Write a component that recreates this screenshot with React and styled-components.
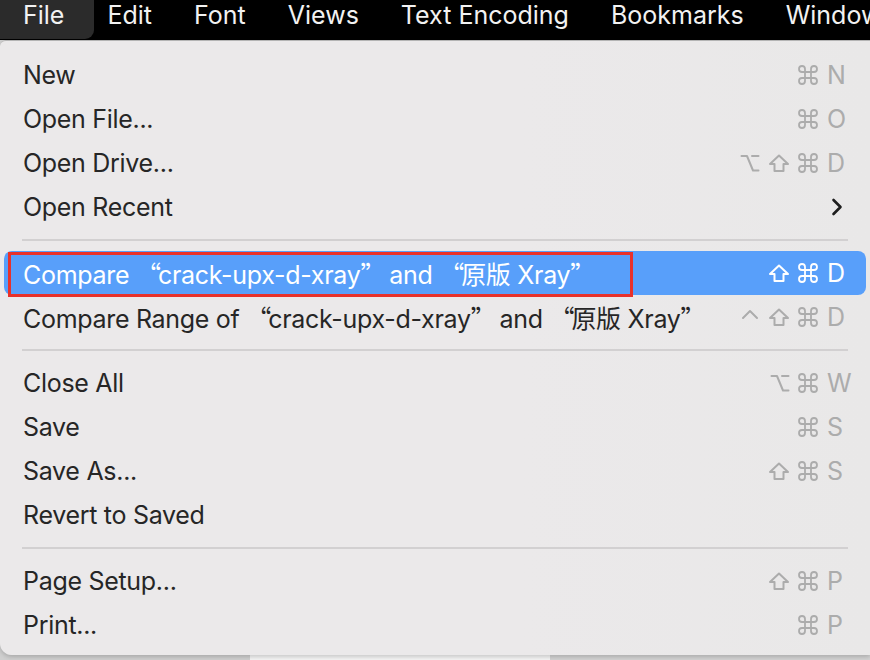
import React from "react";
import styled, { createGlobalStyle } from "styled-components";

const GlobalStyle = createGlobalStyle`
  html, body {
    margin: 0;
    padding: 0;
    background: #d4d4d4;
  }
  body {
    width: 870px;
    height: 660px;
    overflow: hidden;
    font-family: Inter, "Noto Sans CJK SC", "Liberation Sans", sans-serif;
  }
`;

const Screen = styled.div`
  display: flex;
  flex-direction: column;
  width: 870px;
  height: 660px;
  background: linear-gradient(to right, #cfcfcf 0 250px, #f4f4f4 250px 550px, #d2d2d2 550px);
`;

const MenuBar = styled.div`
  display: flex;
  align-items: stretch;
  height: 40px;
  background: #000;
  flex-shrink: 0;
  overflow: hidden;
`;

const MenuTitle = styled.div`
  display: flex;
  align-items: center;
  padding: ${({ active }) => (active ? "0 30px 10px 23px" : "0 21px 10px")};
  margin-right: ${({ active }) => (active ? "-8px" : "0")};
  background: ${({ active }) => (active ? "#2b2b2b" : "transparent")};
  border-radius: 0 0 9px 0;
  color: #f2f2f2;
  font-size: 25px;
  font-weight: 400;
  white-space: nowrap;
  height: 39px;
  box-sizing: border-box;
`;

const Dropdown = styled.div`
  display: flex;
  flex-direction: column;
  height: 615px;
  padding: 12px 0 8px;
  box-sizing: border-box;
  background: linear-gradient(to right, #ebe9ea, #ebe9ea 60%, #e9e8e8);
  border-top: 1px solid #b4b4b4;
  border-radius: 6px 0 0 12px;
  box-shadow: 0 2px 4px rgba(0, 0, 0, 0.18);
`;

const Row = styled.div`
  position: relative;
  display: flex;
  align-items: center;
  justify-content: space-between;
  height: 44px;
  margin: 0 4px;
  padding: 0 17px 0 19px;
  border-radius: 8px;
  background: ${({ highlighted }) => (highlighted ? "#589ffa" : "transparent")};
  color: ${({ highlighted }) => (highlighted ? "#ffffff" : "#262626")};
  font-size: 25px;
  white-space: nowrap;
`;

const Label = styled.span`
  letter-spacing: -0.3px;
`;

// curly quotes are set full-width, as the CJK system font does
const Quote = styled.span`
  font-family: "Noto Sans CJK SC", sans-serif;
  letter-spacing: -3px;
`;

const Separator = styled.div`
  display: flex;
  align-items: center;
  height: 22px;
  padding: 0 22px;

  &::after {
    content: "";
    flex: 1;
    height: 2px;
    background: #d2d0d1;
  }
`;

const Shortcut = styled.div`
  display: flex;
  align-items: center;
  gap: 8px;
  color: ${({ highlighted }) => (highlighted ? "#ffffff" : "#acacac")};
`;

const Key = styled.span`
  width: 22px;
  margin-left: 1px;
  text-align: left;
`;

const Glyph = styled.svg`
  display: block;
  width: ${({ w }) => w || 20}px;
  height: 20px;
  fill: none;
  stroke: currentColor;
  stroke-width: 2;
  stroke-linecap: round;
  stroke-linejoin: round;
`;

const Chevron = styled.svg`
  display: block;
  width: 12px;
  height: 18px;
  margin-right: 6px;
  fill: none;
  stroke: #1e1e1e;
  stroke-width: 2.6;
  stroke-linecap: round;
  stroke-linejoin: round;
`;

const Annotation = styled.div`
  position: absolute;
  left: 4px;
  top: 1px;
  width: 625px;
  height: 45px;
  box-sizing: border-box;
  border: 3px solid #e8312b;
  pointer-events: none;
`;

const glyphs = {
  cmd: (
    <Glyph viewBox="2 2 20 20" style={{ strokeWidth: 1.8 }}>
      <path d="M15 6v12a3 3 0 1 0 3-3H6a3 3 0 1 0 3 3V6a3 3 0 1 0-3 3h12a3 3 0 1 0-3-3" />
    </Glyph>
  ),
  shift: (
    <Glyph viewBox="0 0 22 20" w={22}>
      <path d="M11 2.5 L20 11 H15.5 V18 H6.5 V11 H2 Z" />
    </Glyph>
  ),
  opt: (
    <Glyph viewBox="0 0 20 20">
      <path d="M1.5 3 H7 L13 17.5 H18.5" />
      <path d="M12 3 H18.5" />
    </Glyph>
  ),
  ctrl: (
    <Glyph viewBox="0 0 20 20">
      <path d="M3 11 L10 4 L17 11" />
    </Glyph>
  ),
};

const menuTitles = ["File", "Edit", "Font", "Views", "Text Encoding", "Bookmarks", "Window"];

const items = [
  { label: "New", mods: ["cmd"], key: "N" },
  { label: "Open File...", mods: ["cmd"], key: "O" },
  { label: "Open Drive...", mods: ["opt", "shift", "cmd"], key: "D" },
  { label: "Open Recent", submenu: true },
  "sep",
  {
    label: "Compare “crack-upx-d-xray” and “原版 Xray”",
    mods: ["shift", "cmd"],
    key: "D",
    highlighted: true,
  },
  {
    label: "Compare Range of “crack-upx-d-xray” and “原版 Xray”",
    mods: ["ctrl", "shift", "cmd"],
    key: "D",
  },
  "sep",
  { label: "Close All", mods: ["opt", "cmd"], key: "W" },
  { label: "Save", mods: ["cmd"], key: "S" },
  { label: "Save As...", mods: ["shift", "cmd"], key: "S" },
  { label: "Revert to Saved" },
  "sep",
  { label: "Page Setup...", mods: ["shift", "cmd"], key: "P" },
  { label: "Print...", mods: ["cmd"], key: "P" },
];

const renderLabel = (text) =>
  text.split(/([“”])/).map((part, i) =>
    part === "“" || part === "”" ? <Quote key={i}>{part}</Quote> : part
  );

const MenuItem = ({ item }) => (
  <Row highlighted={item.highlighted}>
    <Label>{renderLabel(item.label)}</Label>
    {item.key && (
      <Shortcut highlighted={item.highlighted}>
        {item.mods.map((m) => (
          <React.Fragment key={m}>{glyphs[m]}</React.Fragment>
        ))}
        <Key>{item.key}</Key>
      </Shortcut>
    )}
    {item.submenu && (
      <Chevron viewBox="0 0 12 18">
        <path d="M2.5 2 L9.5 9 L2.5 16" />
      </Chevron>
    )}
    {item.highlighted && <Annotation />}
  </Row>
);

export default function App() {
  return (
    <>
      <GlobalStyle />
      <Screen>
        <MenuBar>
          {menuTitles.map((t, i) => (
            <MenuTitle key={t} active={i === 0}>
              {t}
            </MenuTitle>
          ))}
        </MenuBar>
        <Dropdown>
          {items.map((item, i) =>
            item === "sep" ? <Separator key={i} /> : <MenuItem key={i} item={item} />
          )}
        </Dropdown>
      </Screen>
    </>
  );
}
